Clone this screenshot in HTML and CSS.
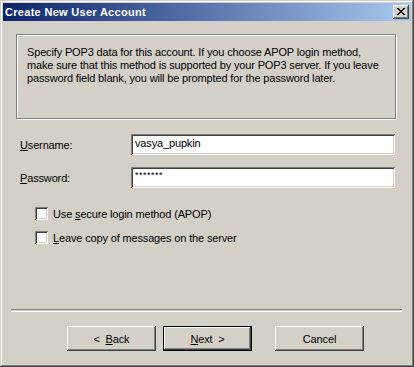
FILE: index.html
```html
<!DOCTYPE html>
<html lang="en">
<head>
    <meta charset="UTF-8">
    <title>Create New User Account</title>
    <link rel="stylesheet" href="styles.css">
</head>
<body>
    <div class="window">
        <div class="titlebar">
            <span class="title">Create New User Account</span>
            <div class="close">
                <svg width="8" height="7" viewBox="0 0 8 7" shape-rendering="crispEdges">
                    <path d="M0 0h2v1H0zM6 0h2v1H6zM1 1h2v1H1zM5 1h2v1H5zM2 2h4v1H2zM3 3h2v1H3zM2 4h4v1H2zM1 5h2v1H1zM5 5h2v1H5zM0 6h2v1H0zM6 6h2v1H6z" fill="#000"/>
                </svg>
            </div>
        </div>

        <div class="content">
            <div class="info">
                Specify POP3 data for this account. If you choose APOP login method,<br>
                make sure that this method is supported by your POP3 server. If you leave<br>
                password field blank, you will be prompted for the password later.
            </div>

            <div class="fields">
                <div class="row">
                    <label><u>U</u>sername:</label>
                    <div class="edit">vasya_pupkin</div>
                </div>
                <div class="row">
                    <label><u>P</u>assword:</label>
                    <div class="edit pass">*******</div>
                </div>
            </div>

            <div class="checks">
                <div class="check">
                    <span class="box"></span>
                    <span>Use <u>s</u>ecure login method (APOP)</span>
                </div>
                <div class="check">
                    <span class="box"></span>
                    <span><u>L</u>eave copy of messages on the server</span>
                </div>
            </div>

            <div class="separator"></div>

            <div class="buttons">
                <div class="btn">&lt;&nbsp;&nbsp;<u>B</u>ack</div>
                <div class="btn default"><u>N</u>ext&nbsp;&nbsp;&gt;</div>
                <div class="btn cancel">Cancel</div>
            </div>
        </div>
    </div>
</body>
</html>
```

FILE: styles.css
```css
body {
    margin: 0;
    font-family: "Liberation Sans", Arial, sans-serif;
    font-size: 11px;
    letter-spacing: -0.15px;
    color: #000;
    background: #d4d0c8;
}
.window {
    width: 414px;
    height: 367px;
    box-sizing: border-box;
    padding: 3px;
    background: #d4d0c8;
    box-shadow: inset -1px -1px #404040, inset 1px 1px #d4d0c8, inset -2px -2px #808080, inset 2px 2px #fff;
    display: flex;
    flex-direction: column;
}
.titlebar {
    height: 18px;
    flex-shrink: 0;
    display: flex;
    align-items: center;
    justify-content: space-between;
    padding: 0 2px;
    background: linear-gradient(to right, #0a246a, #a6caf0);
}
.title {
    color: #fff;
    font-weight: bold;
    font-size: 11px;
    letter-spacing: 0.3px;
}
.close {
    width: 16px;
    height: 14px;
    box-sizing: border-box;
    background: #d4d0c8;
    box-shadow: inset -1px -1px #404040, inset 1px 1px #fff, inset -2px -2px #808080, inset 2px 2px #d4d0c8;
    display: flex;
    align-items: center;
    justify-content: center;
    padding: 0 1px 1px 0;
}
.close svg {
    display: block;
}
.content {
    flex: 1;
    display: flex;
    flex-direction: column;
}
.info {
    margin: 13px 15px 0 13px;
    height: 85px;
    box-sizing: border-box;
    border: 1px solid #808080;
    box-shadow: inset 1px 1px #fff, 1px 1px #fff;
    padding: 11px 10px 0 10px;
    line-height: 13px;
    white-space: nowrap;
}
.fields {
    margin: 15px 16px 0 16px;
    display: flex;
    flex-direction: column;
    gap: 12px;
}
.row {
    display: flex;
    align-items: center;
}
.row label {
    width: 111px;
    padding-left: 1px;
}
.edit {
    flex: 1;
    height: 21px;
    box-sizing: border-box;
    background: #fff;
    padding: 3px 4px 0 4px;
    box-shadow: inset 1px 1px #808080, inset -1px -1px #fff, inset 2px 2px #404040, inset -2px -2px #d4d0c8;
}
.edit.pass {
    font-size: 9px;
    letter-spacing: 0.5px;
    padding-top: 3px;
}
.checks {
    margin: 19px 0 0 32px;
    display: flex;
    flex-direction: column;
    gap: 11px;
}
.check {
    display: flex;
    align-items: center;
    gap: 5px;
    height: 13px;
}
.box {
    width: 13px;
    height: 13px;
    box-sizing: border-box;
    background: #fff;
    box-shadow: inset 1px 1px #808080, inset -1px -1px #fff, inset 2px 2px #404040, inset -2px -2px #d4d0c8;
}
.separator {
    margin: auto 9px 0 8px;
    height: 1px;
    border-top: 1px solid #808080;
    border-bottom: 1px solid #fff;
}
.buttons {
    display: flex;
    justify-content: flex-end;
    padding: 14px 47px 13px 0;
}
.btn {
    width: 89px;
    height: 25px;
    box-sizing: border-box;
    display: flex;
    align-items: center;
    justify-content: center;
    background: #d4d0c8;
    box-shadow: inset -1px -1px #404040, inset 1px 1px #fff, inset -2px -2px #808080, inset 2px 2px #d4d0c8;
}
.btn + .btn {
    margin-left: 7px;
}
.btn.default {
    border: 1px solid #000;
}
.btn.cancel {
    margin-left: 23px;
}
```
